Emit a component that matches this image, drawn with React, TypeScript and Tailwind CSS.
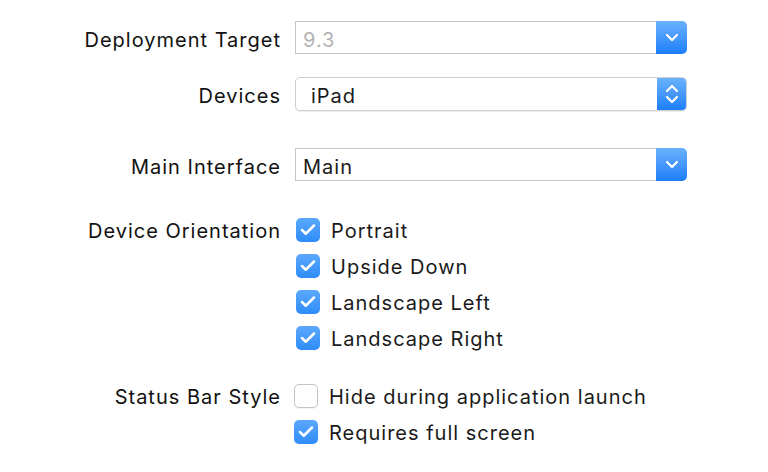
import { Check } from "lucide-react";

const font = { fontFamily: 'Inter, "Noto Sans", "Liberation Sans", sans-serif' };

function ChevronDown() {
  return (
    <svg width="14" height="9" viewBox="0 0 14 9" fill="none">
      <path d="M2 2l5 5 5-5" stroke="white" strokeWidth="2.2" strokeLinecap="round" strokeLinejoin="round" />
    </svg>
  );
}

function UpDown() {
  return (
    <svg width="14" height="22" viewBox="0 0 14 22" fill="none">
      <path d="M2 8l5-5 5 5" stroke="white" strokeWidth="2.2" strokeLinecap="round" strokeLinejoin="round" />
      <path d="M2 14l5 5 5-5" stroke="white" strokeWidth="2.2" strokeLinecap="round" strokeLinejoin="round" />
    </svg>
  );
}

function ComboBox({ value, muted }: { value: string; muted?: boolean }) {
  return (
    <div className="flex h-[33px] w-[392px]">
      <div
        className={`flex-1 flex items-center pl-[7px] pt-[4px] bg-white border border-[#c6c6c6] border-r-0 text-[20px] leading-[26px] tracking-[1px] ${
          muted ? "text-[#b3b3b3]" : "text-[#1a1a1a]"
        }`}
      >
        {value}
      </div>
      <div className="w-[31px] flex items-center justify-center rounded-r-[5px] bg-gradient-to-b from-[#69b1fc] to-[#1a7ef9]">
        <ChevronDown />
      </div>
    </div>
  );
}

function PopUp({ value }: { value: string }) {
  return (
    <div className="flex h-[34px] w-[392px] rounded-[5px] border border-[#cfcfcf] shadow-[0_1px_1px_rgba(0,0,0,0.08)] bg-white overflow-hidden">
      <div className="flex-1 flex items-center pl-[15px] pt-[3px] text-[20px] leading-[26px] tracking-[1px] text-[#1a1a1a]">
        {value}
      </div>
      <div className="w-[29px] flex items-center justify-center bg-gradient-to-b from-[#69b1fc] to-[#1a7ef9]">
        <UpDown />
      </div>
    </div>
  );
}

function CheckRow({ label, checked }: { label: string; checked: boolean }) {
  return (
    <div className="flex items-center h-[36px]">
      {checked ? (
        <div className="w-[24px] h-[24px] rounded-[5px] bg-gradient-to-b from-[#5aa8fc] to-[#2d8cf9] flex items-center justify-center">
          <Check className="w-[18px] h-[18px] text-white" strokeWidth={3.4} />
        </div>
      ) : (
        <div className="w-[24px] h-[24px] rounded-[5px] bg-white border border-[#c4c4c4] shadow-[0_1px_1px_rgba(0,0,0,0.05)]" />
      )}
      <span className="ml-[11px] pt-[2px] text-[20px] leading-[26px] tracking-[1px] text-[#1a1a1a]">{label}</span>
    </div>
  );
}

function Label({ children, tight }: { children: React.ReactNode; tight?: boolean }) {
  return (
    <div
      className={`w-[281px] ${tight ? "pt-[1px]" : "pt-[4px]"} text-right text-[20px] leading-[26px] tracking-[1px] text-[#111]`}
    >
      {children}
    </div>
  );
}

export default function App() {
  return (
    <div style={font} className="w-[768px] h-[472px] bg-white overflow-hidden pt-[21px]">
      <div className="flex items-center">
        <Label>Deployment Target</Label>
        <div className="ml-[14px]">
          <ComboBox value="9.3" muted />
        </div>
      </div>

      <div className="flex items-center mt-[23px]">
        <Label>Devices</Label>
        <div className="ml-[14px]">
          <PopUp value="iPad" />
        </div>
      </div>

      <div className="flex items-center mt-[37px]">
        <Label>Main Interface</Label>
        <div className="ml-[14px]">
          <ComboBox value="Main" />
        </div>
      </div>

      <div className="flex mt-[31px]">
        <div className="h-[36px] flex items-center">
          <Label tight>Device Orientation</Label>
        </div>
        <div className="ml-[15px] flex flex-col">
          <CheckRow label="Portrait" checked />
          <CheckRow label="Upside Down" checked />
          <CheckRow label="Landscape Left" checked />
          <CheckRow label="Landscape Right" checked />
        </div>
      </div>

      <div className="flex mt-[22px]">
        <div className="h-[36px] flex items-center">
          <Label tight>Status Bar Style</Label>
        </div>
        <div className="ml-[13px] flex flex-col">
          <CheckRow label="Hide during application launch" checked={false} />
          <CheckRow label="Requires full screen" checked />
        </div>
      </div>
    </div>
  );
}
